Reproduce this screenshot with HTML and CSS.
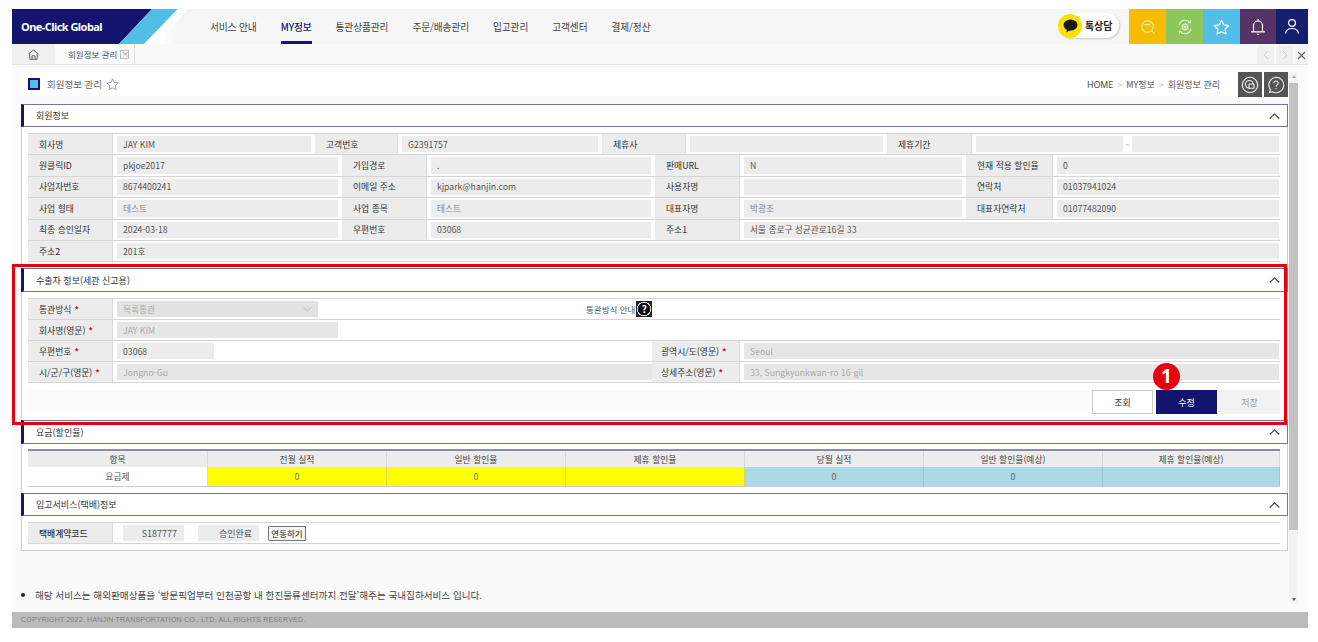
FILE: index.html
```html
<!DOCTYPE html>
<html lang="ko">
<head>
<meta charset="utf-8">
<title>회원정보 관리</title>
<link rel="stylesheet" href="styles.css">
</head>
<body>
<div class="app">
  <header class="top">
    <a class="logo">
      <svg class="logo-art" width="176" height="35" viewBox="0 0 176 35"><polygon points="0,0 140,0 107,35 0,35" fill="#14146e"/><polygon points="140,0 166,0 132,35 107,35" fill="#52bde6"/><polygon points="166,0 176,0 146,35 132,35" fill="#fff"/></svg>
      <span class="logo-text">One-Click Global</span>
    </a>
    <nav class="nav">
      <a>서비스 안내</a><a class="on">MY정보</a><a>통관상품관리</a><a>주문/배송관리</a><a>입고관리</a><a>고객센터</a><a>결제/정산</a>
    </nav>
    <div class="kakao">
      <span class="kakao-dot"><svg width="15" height="14" viewBox="0 0 15 14"><ellipse cx="7.5" cy="6" rx="7" ry="5.6" fill="#1a1a1a"/><path d="M4 10 L3.4 13.6 L7.4 11 Z" fill="#1a1a1a"/></svg></span>
      <span class="kakao-text">톡상담</span>
    </div>
    <div class="quick">
      <span class="q q1"><svg width="16" height="16" viewBox="0 0 16 16" fill="none" stroke="#fbe9a8" stroke-width="1.1"><circle cx="7.5" cy="7.5" r="5.8"/><path d="M4.6 5.6h5.8M11.6 11.6l3 3"/></svg></span>
      <span class="q q2"><svg width="16" height="16" viewBox="0 0 16 16" fill="none" stroke="#e6f3d6" stroke-width="1.1"><path d="M2 6a6.3 6.3 0 0 1 11-2.4M14 10a6.3 6.3 0 0 1-11 2.4"/><path d="M13.6 1.4v2.4h-2.4M2.4 14.6v-2.4h2.4"/><path d="M8 4.8l2.8 1.6v3.2L8 11.2 5.2 9.600V6.400z"/><circle cx="8" cy="8" r="1"/></svg></span>
      <span class="q q3"><svg width="17" height="16" viewBox="0 0 17 16" fill="none" stroke="#fff" stroke-width="1.2" stroke-linejoin="round"><path d="M8.500 1.200l2.200 4.600 5 .7-3.600 3.500.9 5-4.500-2.400L4 15l.9-5L1.300 6.500l5-.7z"/></svg></span>
      <span class="q q4"><svg width="16" height="18" viewBox="0 0 16 18" fill="none" stroke="#fff" stroke-width="1.2"><path d="M3.500 13.500V7.500a4.500 4.500 0 0 1 9 0v6M1 13.800h14M8 1v2"/><path d="M6.800 16.300h2.400"/></svg></span>
      <span class="q q5"><svg width="16" height="17" viewBox="0 0 16 17" fill="none" stroke="#fff" stroke-width="1.2"><circle cx="8" cy="5" r="3.400"/><path d="M1.500 15.500c.5-3.600 3-5 6.500-5s6 1.400 6.500 5"/></svg></span>
    </div>
  </header>

  <div class="tabbar">
    <span class="tab-home"><svg width="11" height="11" viewBox="0 0 11 11" fill="none" stroke="#555" stroke-width=".9"><path d="M.5 5 5.500 1l5 4M1.800 4.500v5.800h7.400V4.500"/><path d="M4 10.300V6.800h3v3.500"/></svg></span>
    <span class="tab-active">회원정보 관리<span class="tab-x">×</span></span>
    <span class="tab-ctrl">
      <span class="tc"><svg width="6" height="10" viewBox="0 0 6 10" fill="none" stroke="#ccc"><path d="M5 1 1 5l4 4"/></svg></span>
      <span class="tc"><svg width="6" height="10" viewBox="0 0 6 10" fill="none" stroke="#ccc"><path d="m1 1 4 4-4 4"/></svg></span>
      <span class="tc tc-x"><svg width="9" height="9" viewBox="0 0 9 9" fill="none" stroke="#666" stroke-width="1.200"><path d="m1 1 7 7M8 1 1 8"/></svg></span>
    </span>
  </div>

  <main class="main">
    <div class="content">
      <div class="titlebar">
        <span class="t-icon"></span>
        <span class="t-name">회원정보 관리</span>
        <svg class="t-star" width="13" height="13" viewBox="0 0 13 13" fill="none" stroke="#888" stroke-width=".8" stroke-linejoin="round"><path d="M6.500 .8l1.700 3.700 4 .5-3 2.700.8 4-3.500-2-3.500 2 .8-4-3-2.700 4-.5z"/></svg>
        <span class="crumb"><b>HOME</b><i>&gt;</i>MY정보<i>&gt;</i>회원정보 관리</span>
        <span class="t-btn"><svg width="18" height="18" viewBox="0 0 18 18" fill="none" stroke="#eee" stroke-width="1.100"><circle cx="9" cy="9" r="7.700"/><circle cx="8.300" cy="8.300" r="3.800"/><rect x="8" y="8" width="5" height="4.200" rx=".8" fill="#555"/></svg></span>
        <span class="t-btn"><svg width="18" height="18" viewBox="0 0 18 18" fill="none" stroke="#eee" stroke-width="1.100"><path d="M9 1.300a7.700 7.700 0 1 1-3.600 14.500L2.500 16.500l.9-2.900A7.700 7.700 0 0 1 9 1.300z"/><path d="M6.800 7.200A2.200 2.200 0 1 1 9.800 9.200c-.6.300-.8.700-.8 1.500M9 12.200v1.100"/></svg></span>
      </div>

      <section class="panel">
        <div class="sec"><span>회원정보</span><svg class="chev" width="11" height="6" viewBox="0 0 11 6" fill="none" stroke="#444" stroke-width="1.100"><path d="m.7 5.500 4.800-4.700 4.800 4.700"/></svg></div>
        <div class="tbl tbl-a">
          <div class="row cols-first">
            <span class="lab">회사명</span><span class="val"><span class="inp">JAY KIM</span></span>
            <span class="lab">고객번호</span><span class="val"><span class="inp">G2391757</span></span>
            <span class="lab">제휴사</span><span class="val"><span class="inp"></span></span>
            <span class="lab">제휴기간</span><span class="val val-range"><span class="inp"></span><em>~</em><span class="inp"></span></span>
          </div>
          <div class="row cols-four">
            <span class="lab">원클릭ID</span><span class="val"><span class="inp">pkjoe2017</span></span>
            <span class="lab">가입경로</span><span class="val"><span class="inp">.</span></span>
            <span class="lab">판매URL</span><span class="val"><span class="inp">N</span></span>
            <span class="lab">현재 적용 할인율</span><span class="val"><span class="inp">0</span></span>
          </div>
          <div class="row cols-four">
            <span class="lab">사업자번호</span><span class="val"><span class="inp">8674400241</span></span>
            <span class="lab">이메일 주소</span><span class="val"><span class="inp">kjpark@hanjin.com</span></span>
            <span class="lab">사용자명</span><span class="val"><span class="inp"></span></span>
            <span class="lab">연락처</span><span class="val"><span class="inp">01037941024</span></span>
          </div>
          <div class="row cols-four">
            <span class="lab">사업 형태</span><span class="val"><span class="inp dim">테스트</span></span>
            <span class="lab">사업 종목</span><span class="val"><span class="inp dim">테스트</span></span>
            <span class="lab">대표자명</span><span class="val"><span class="inp dim">박광조</span></span>
            <span class="lab">대표자연락처</span><span class="val"><span class="inp">01077482090</span></span>
          </div>
          <div class="row cols-addr">
            <span class="lab">최종 승인일자</span><span class="val"><span class="inp">2024-03-18</span></span>
            <span class="lab">우편번호</span><span class="val"><span class="inp">03068</span></span>
            <span class="lab">주소1</span><span class="val"><span class="inp">서울 종로구 성균관로16길 33</span></span>
          </div>
          <div class="row cols-full">
            <span class="lab">주소2</span><span class="val"><span class="inp">201호</span></span>
          </div>
        </div>

        <div class="sec sec-tall"><span>수출자 정보(세관 신고용)</span><svg class="chev" width="11" height="6" viewBox="0 0 11 6" fill="none" stroke="#444" stroke-width="1.100"><path d="m.7 5.500 4.800-4.700 4.800 4.700"/></svg></div>
        <div class="tbl tbl-b">
          <div class="row cols-full">
            <span class="lab">통관방식<u>*</u></span>
            <span class="val val-method">
              <span class="inp inp-off sel">목록통관<svg width="9" height="5" viewBox="0 0 9 5" fill="none" stroke="#bbb"><path d="m.5.500 4 3.500 4-3.500"/></svg></span>
              <span class="guide">통관방식 안내<span class="guide-q">?</span></span>
            </span>
          </div>
          <div class="row cols-full">
            <span class="lab">회사명(영문)<u>*</u></span><span class="val"><span class="inp inp-off w221">JAY KIM</span></span>
          </div>
          <div class="row cols-two">
            <span class="lab">우편번호<u>*</u></span><span class="val"><span class="inp w97">03068</span></span>
            <span class="lab">광역시/도(영문)<u>*</u></span><span class="val"><span class="inp inp-off">Seoul</span></span>
          </div>
          <div class="row cols-two">
            <span class="lab">시/군/구(영문)<u>*</u></span><span class="val"><span class="inp inp-off">Jongno-Gu</span></span>
            <span class="lab">상세주소(영문)<u>*</u></span><span class="val"><span class="inp inp-off">33, Sungkyunkwan-ro 16-gil</span></span>
          </div>
        </div>
        <div class="actions">
          <button class="btn">조회</button><button class="btn btn-main">수정</button><button class="btn btn-off">저장</button>
        </div>

        <div class="sec sec-tall sec-fee"><span>요금(할인율)</span><svg class="chev" width="11" height="6" viewBox="0 0 11 6" fill="none" stroke="#444" stroke-width="1.100"><path d="m.7 5.500 4.800-4.700 4.800 4.700"/></svg></div>
        <div class="fee">
          <span class="fh">항목</span><span class="fh">전월 실적</span><span class="fh">일반 할인율</span><span class="fh">제휴 할인율</span><span class="fh">당월 실적</span><span class="fh">일반 할인율(예상)</span><span class="fh">제휴 할인율(예상)</span>
          <span class="fd">요금제</span><span class="fd y">0</span><span class="fd y">0</span><span class="fd y"></span><span class="fd b">0</span><span class="fd b">0</span><span class="fd b"></span>
        </div>

        <div class="sec"><span>입고서비스(택배)정보</span><svg class="chev" width="11" height="6" viewBox="0 0 11 6" fill="none" stroke="#444" stroke-width="1.100"><path d="m.7 5.500 4.800-4.700 4.800 4.700"/></svg></div>
        <div class="tbl tbl-c">
          <div class="row cols-full">
            <span class="lab lab-strong">택배계약코드</span>
            <span class="val val-courier"><span class="chip">S187777</span><span class="chip">승인완료</span><button class="link-btn">연동하기</button></span>
          </div>
        </div>
      </section>

      <p class="note"><span class="dot"></span>해당 서비스는 해외판매상품을 ‘방문픽업부터 인천공항 내 한진물류센터까지 전달’해주는 국내집하서비스 입니다.</p>
    </div>
    <div class="scroll">
      <span class="arrow up"></span>
      <span class="thumb"></span>
      <span class="arrow down"></span>
    </div>
  </main>

  <footer class="foot">COPYRIGHT 2022. HANJIN TRANSPORTATION CO., LTD. ALL RIGHTS RESERVED.</footer>

  <div class="highlight"></div>
  <span class="badge">1</span>
</div>
</body>
</html>
```
FILE: styles.css
```css
* { box-sizing: border-box; }
html, body { margin: 0; padding: 0; height: 642px; overflow: hidden; background: #fff; }
body { font-family: "Noto Sans CJK KR", "Noto Sans", sans-serif; color: #333; font-size: 9px; }
.app { position: relative; width: 1296px; margin: 9px 0 0 12px; }

/* header */
.top { display: flex; align-items: stretch; height: 35px; background: linear-gradient(100deg, #fff 12%, #f6f6f6 13%, #f6f6f6 100%); }
.logo { position: relative; width: 176px; flex: none; display: flex; align-items: center; padding-left: 9px; }
.logo-art { position: absolute; left: 0; top: 0; }
.logo-text { position: relative; color: #fff; font: 700 11px "Noto Sans", sans-serif; letter-spacing: -.55px; }
.nav { display: flex; gap: 24px; margin-left: 22px; }
.nav a { display: flex; align-items: center; font-size: 9.700px; letter-spacing: -.1px; color: #444; border-bottom: 3px solid transparent; padding-top: 3px; }
.nav a.on { color: #14146e; font-weight: 500; border-bottom-color: #14146e; }
.kakao { margin: 4px 10px 0 auto; height: 25px; width: 61px; border-radius: 13px; background: #fff; box-shadow: 1px 1px 2px rgba(0,0,0,.18); display: flex; align-items: center; gap: 3px; }
.kakao-dot { width: 24px; height: 24px; border-radius: 50%; background: #fae100; display: flex; align-items: center; justify-content: center; }
.kakao-text { font-size: 10px; font-weight: 700; color: #222; letter-spacing: -.1px; }
.quick { display: flex; }
.q { display: flex; align-items: center; justify-content: center; height: 35px; width: 37px; }
.q1 { background: #f5bc00; }
.q2 { background: #8dc65c; }
.q3 { background: #52bde6; }
.q4 { background: #553366; width: 36px; }
.q5 { background: #14206e; width: 32px; }

/* tabs */
.tabbar { display: flex; height: 21px; background: #f9f9f9; border-bottom: 1px solid #e2e2e2; }
.tab-home { width: 43px; background: #f0f0f0; display: flex; align-items: center; justify-content: center; }
.tab-active { width: 80px; padding-left: 13px; background: #fbfbfb; border-right: 1px solid #ddd; display: flex; align-items: center; font-size: 8.500px; color: #555; }
.tab-x { width: 9px; height: 9px; margin-left: 3px; border: 1px solid #bbb; color: #999; font-size: 8px; line-height: 6px; text-align: center; }
.tab-ctrl { margin-left: auto; display: flex; gap: 2px; padding-top: 2px; }
.tc { width: 17px; height: 18px; background: #f0f0f0; display: flex; align-items: center; justify-content: center; }
.tc-x { width: 13px; background: #f4f4f4; }

/* main */
.main { display: flex; height: 547px; background: #fafafa; padding: 7px 0 9px 9px; }
.content { width: 1267px; flex: none; display: flex; flex-direction: column; }
.titlebar { display: flex; align-items: center; height: 24px; background: #fff; padding-left: 7px; margin-bottom: 8px; }
.t-icon { width: 12px; height: 12px; background: #52bde6; border: 2.500px solid #14146e; }
.t-name { margin-left: 7px; font-size: 9.500px; color: #666; }
.t-star { margin-left: 4px; }
.crumb { margin-left: auto; margin-right: 16px; font-size: 9px; color: #555; }
.crumb b { font-weight: 400; color: #444; font-family: "Noto Sans", sans-serif; font-size: 8.800px; }
.crumb i { font-style: normal; color: #bbb; margin: 0 4px; }
.t-btn { width: 24px; height: 25px; margin-left: 2px; align-self: flex-start; background: #555; display: flex; align-items: center; justify-content: center; }

/* panel */
.panel { height: 447px; background: #fff; border: 1px solid #ccc; border-top: 0; }
.sec { display: flex; align-items: center; justify-content: space-between; height: 23px; padding: 0 7px 0 12px; margin: 0 -1px 6px -1px; border: 1px solid #74749c; border-left: 3px solid #14146e; font-size: 9px; color: #333; background: #fff; }
.sec-tall { height: 24px; }
.sec-fee { margin-bottom: 5px; }
.tbl { margin: 0 7px 0 6px; border-top: 1px solid #d5d5d5; }
.tbl-a { height: 129px; margin-bottom: 6px; }
.tbl-a .row { height: 21.400px; }
.tbl-b { height: 85px; margin-bottom: 7px; }
.tbl-b .row { height: 21px; }
.tbl-c { height: 22px; }
.tbl-c .row { height: 21px; }
.row { display: grid; border-bottom: 1px solid #d5d5d5; }
.cols-first { grid-template-columns: 85px 202px 83px 204px 84px 201px 85px 308px; }
.cols-four { grid-template-columns: 85px 229px 85px 228px 85px 226px 87px 227px; }
.cols-addr { grid-template-columns: 85px 229px 85px 228px 85px 540px; }
.cols-two { grid-template-columns: 85px 539px 88px 540px; }
.cols-full { grid-template-columns: 85px 1167px; }
.lab { display: flex; align-items: center; gap: 3px; padding-left: 11px; background: #ececec; color: #333; font-size: 8.800px; white-space: nowrap; border-right: 1px solid #ddd; }
.cols-two .val + .lab { padding-left: 9px; }
.lab u { text-decoration: none; color: #e60012; font-weight: 700; }
.lab-strong { font-weight: 500; }
.val { display: flex; align-items: stretch; padding: 2px 4px; min-width: 0; }
.val:last-child { padding-right: 1px; }
.cols-two .val:not(:last-child) { padding-right: 0; }
.inp { flex: 1; display: flex; align-items: center; padding-left: 6px; background: #ececec; color: #555; font-size: 8.700px; }
.dim { color: #888; }
.inp-off { background: #e6e6e6; color: #aaa; }
.val-range em { display: flex; align-items: center; justify-content: center; width: 9px; font-style: normal; color: #777; font-size: 8px; }
.sel { flex: none; width: 201px; justify-content: space-between; padding-right: 6px; background: #e2e2e2; }
.guide { margin-left: 268px; display: flex; align-items: center; font-size: 8.500px; color: #555; white-space: nowrap; }
.guide-q { width: 16px; height: 16px; margin-left: 1px; background: radial-gradient(circle closest-side, #111 78%, #ddd 80%, #ddd 90%, #222 92%); color: #fff; font-size: 10px; font-weight: 700; text-align: center; line-height: 16px; }
.w221 { flex: none; width: 221px; }
.w97 { flex: none; width: 97px; }
.actions { display: flex; justify-content: flex-end; gap: 2px; height: 24px; margin: 0 7px 6px 6px; background: #fbfbfb; }
.btn { width: 61px; border: 1px solid #ccc; background: #fff; font: 400 9px "Noto Sans CJK KR", sans-serif; color: #333; padding: 0; }
.btn:first-child { margin-right: 1px; }
.btn-main { background: #14146e; border-color: #14146e; color: #fff; }
.btn-off { background: #f2f2f2; border-color: #f2f2f2; color: #999; }
.fee { display: grid; grid-template-columns: 180px 179px 179px 179px 179px 179px 177px; grid-template-rows: 16px 19px; margin: 0 7px 6px 6px; border-top: 2px solid #8c8ca8; border-bottom: 1px solid #ccc; font-size: 8.800px; }
.fh, .fd { display: flex; align-items: center; justify-content: center; color: #555; border-right: 1px solid #d8d8d8; }
.fh { background: #ececec; color: #444; }
.y { background: #ff0; border-right-color: #d8d85a; color: #777; }
.b { background: #add8e6; border-right-color: #9cc4d2; color: #666; }
.val-courier { align-items: center; padding: 2px 0 2px 10px; }
.chip { width: 61px; height: 16px; background: #ececec; display: flex; align-items: center; justify-content: flex-end; padding-right: 7px; color: #555; font-size: 9px; margin-right: 14px; }
.chip + .chip { margin-right: 9px; }
.link-btn { width: 38px; height: 15px; padding: 0; border: 1px solid #777; border-radius: 1px; background: #f4f4f4; color: #222; font: 400 8.500px "Noto Sans CJK KR", sans-serif; }
.note { display: flex; align-items: center; margin: 37px 0 0 0; font-size: 9.600px; color: #444; }
.dot { width: 4px; height: 4px; border-radius: 50%; background: #222; margin-right: 10px; }

/* scrollbar */
.scroll { width: 9px; margin-left: 1px; background: #f3f3f3; display: flex; flex-direction: column; }
.thumb { height: 447px; background: #c2c2c2; margin-top: 3px; }
.arrow { display: block; height: 8px; }
.arrow.up::after, .arrow.down::after { content: ""; display: block; width: 0; margin: 3px auto 0; border-left: 2.500px solid transparent; border-right: 2.500px solid transparent; }
.arrow.up::after { border-bottom: 3px solid #aaa; }
.arrow.down { margin-top: auto; }
.arrow.down::after { border-top: 3px solid #555; }

/* footer */
.foot { height: 16px; background: #bbb; padding-left: 9px; font: 400 7px/16px "Liberation Sans", sans-serif; color: #808080; letter-spacing: .2px; }

/* overlays */
.highlight { position: absolute; left: 0; top: 255px; width: 1275px; height: 161px; border: 3px solid #e60012; pointer-events: none; }
.badge { position: absolute; left: 1141px; top: 354px; width: 27px; height: 27px; border-radius: 50%; background: #e60012; color: #fff; font: 700 19px/27px "Noto Sans", sans-serif; text-align: center; }
```
